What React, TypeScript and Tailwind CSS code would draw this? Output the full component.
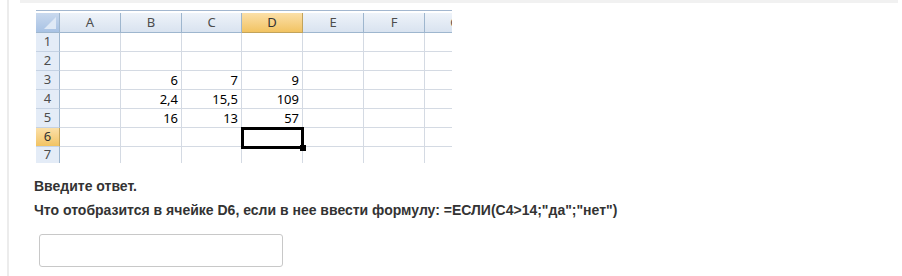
import React from "react"

const cols = ["A", "B", "C", "D", "E", "F", "G"]
const colWidths = ["w-[61px]", "w-[61px]", "w-[60px]", "w-[61px]", "w-[61px]", "w-[61px]", "w-[61px]"]

const data: Record<number, Record<string, string>> = {
  3: { B: "6", C: "7", D: "9" },
  4: { B: "2,4", C: "15,5", D: "109" },
  5: { B: "16", C: "13", D: "57" },
}

function Sheet() {
  const rows = [1, 2, 3, 4, 5, 6, 7]
  return (
    <div className="relative w-[416px] overflow-hidden border-t border-[#a3b7cf] pt-[2px] bg-white font-['Noto_Sans',sans-serif] text-[13px] text-black">
      <div className="flex h-[20px] w-[460px]">
        <div className="relative w-[24px] shrink-0 h-full bg-gradient-to-b from-[#c9d9ee] to-[#a8c2e4] border-r border-b border-[#9eb6ce]">
          <svg className="absolute right-[3px] bottom-[3px]" width="12" height="12" viewBox="0 0 12 12">
            <polygon points="12,0 12,12 0,12" fill="#dfe9f6" />
          </svg>
        </div>
        {cols.map((c, i) => (
          <div
            key={c}
            className={`${colWidths[i]} shrink-0 h-full flex items-center justify-center border-r border-b ${
              c === "D"
                ? "bg-gradient-to-b from-[#fbe0a8] to-[#f2c361] border-[#c2a35b] text-[#333]"
                : "bg-gradient-to-b from-[#eef3f9] to-[#d9e3f0] border-[#9eb6ce] text-[#4d4d4d]"
            }`}
          >
            {c}
          </div>
        ))}
      </div>
      {rows.map((r) => (
        <div key={r} className={`flex w-[460px] ${r === 7 ? "h-[16px]" : "h-[19px]"}`}>
          <div
            className={`w-[24px] shrink-0 h-full flex items-center justify-center border-r ${
              r === 6
                ? "bg-gradient-to-b from-[#fbe0a8] to-[#f2c361] border-[#c2a35b] text-[#333]"
                : "bg-[#e4ecf7] border-[#9eb6ce] text-[#4d4d4d]"
            } ${r === 7 ? "" : "border-b border-b-[#c5d2e3]"}`}
          >
            {r}
          </div>
          {cols.map((c, i) => (
            <div
              key={c}
              className={`${colWidths[i]} shrink-0 h-full flex items-center justify-end pr-[3px] leading-none border-r border-[#d4dae3] ${
                r === 7 ? "" : "border-b"
              }`}
            >
              {data[r]?.[c] ?? ""}
            </div>
          ))}
        </div>
      ))}
      {/* active cell D6 */}
      <div className="absolute left-[205px] top-[116px] w-[63px] h-[22px] border-[3px] border-black" />
      <div className="absolute left-[264px] top-[134px] w-[6px] h-[6px] bg-black" />
    </div>
  )
}

export default function App() {
  return (
    <div className="w-[902px] h-[276px] bg-white overflow-hidden">
      <div className="ml-[7px] h-[276px] border-l-2 border-[#ececec]">
        <div className="ml-[11px] w-[878px] h-[3px] bg-[#f1f1f1]" />
        <div className="ml-[27px] mt-[7px]">
          <Sheet />
        </div>
        <div className="ml-[25px] mt-[11px] font-['Liberation_Sans',Arial,sans-serif] font-bold text-[14px] text-[#333] leading-[24px]">
          <div>Введите ответ.</div>
          <div>Что отобразится в ячейке D6, если в нее ввести формулу: =ЕСЛИ(C4&gt;14;"да";"нет")</div>
        </div>
        <input
          type="text"
          className="block ml-[30px] mt-[12px] w-[244px] h-[33px] border border-[#c8c8c8] rounded-[3px] bg-white outline-none"
        />
      </div>
    </div>
  )
}
